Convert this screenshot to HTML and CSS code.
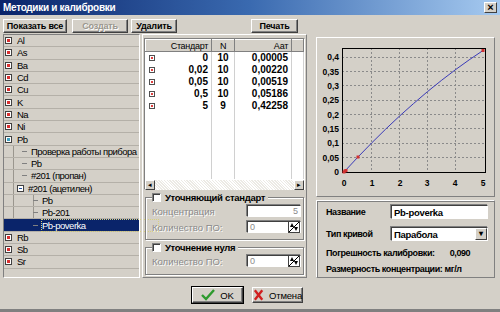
FILE: index.html
```html
<!DOCTYPE html>
<html lang="ru">
<head>
    <meta charset="UTF-8">
    <title>Методики и калибровки</title>
    <link rel="stylesheet" href="styles.css">
</head>
<body>
<div class="window">

    <div class="titlebar">
        <span class="title">Методики и калибровки</span>
        <span class="close">×</span>
    </div>

    <!-- toolbar -->
    <div class="toolbar">
        <button class="btn w-show">Показать все</button>
        <button class="btn w-create disabled">Создать</button>
        <button class="btn w-del">Удалить</button>
        <button class="btn w-print">Печать</button>
    </div>

    <div class="main">

        <!-- method tree -->
        <div class="tree">
            <div class="node"><span class="box"></span>Al</div>
            <div class="node"><span class="box"></span>As</div>
            <div class="node"><span class="box"></span>Ba</div>
            <div class="node"><span class="box"></span>Cd</div>
            <div class="node"><span class="box"></span>Cu</div>
            <div class="node"><span class="box"></span>K</div>
            <div class="node"><span class="box"></span>Na</div>
            <div class="node"><span class="box"></span>Ni</div>
            <div class="node"><span class="box open"></span>Pb</div>
            <div class="node lvl1"><span class="dash"></span>Проверка работы прибора</div>
            <div class="node lvl1"><span class="dash"></span>Pb</div>
            <div class="node lvl1"><span class="dash"></span>#201 (пропан)</div>
            <div class="node lvl1b"><span class="box minus"></span>#201 (ацетилен)</div>
            <div class="node lvl2"><span class="dash"></span>Pb</div>
            <div class="node lvl2"><span class="dash"></span>Pb-201</div>
            <div class="node lvl2 selected"><span class="dash"></span><span class="focus">Pb-poverka</span></div>
            <div class="node"><span class="box"></span>Rb</div>
            <div class="node"><span class="box"></span>Sb</div>
            <div class="node"><span class="box"></span>Sr</div>
        </div>

        <!-- standards table + options -->
        <div class="middle">
            <div class="grid">
                <table class="std">
                    <tr class="head">
                        <th class="c-std">Стандарт</th>
                        <th class="c-n">N</th>
                        <th class="c-a">Аат</th>
                        <th class="c-x"></th>
                    </tr>
                    <tr><td class="c-std"><span class="mark"></span>0</td><td class="c-n">10</td><td class="c-a">0,00005</td><td></td></tr>
                    <tr><td class="c-std"><span class="mark"></span>0,02</td><td class="c-n">10</td><td class="c-a">0,00220</td><td></td></tr>
                    <tr><td class="c-std"><span class="mark"></span>0,05</td><td class="c-n">10</td><td class="c-a">0,00519</td><td></td></tr>
                    <tr><td class="c-std"><span class="mark"></span>0,5</td><td class="c-n">10</td><td class="c-a">0,05186</td><td></td></tr>
                    <tr><td class="c-std"><span class="mark"></span>5</td><td class="c-n">9</td><td class="c-a">0,42258</td><td></td></tr>
                    <tr class="filler"><td></td><td></td><td></td><td></td></tr>
                </table>
                <div class="hscroll">
                    <span class="arrow">&#9666;</span>
                    <span class="track"></span>
                    <span class="arrow">&#9656;</span>
                </div>
            </div>

            <div class="group g1">
                <div class="group-title"><span class="check"></span>Уточняющий стандарт</div>
                <div class="field">
                    <span class="dim">Концентрация</span>
                    <span class="edit to-right">5</span>
                </div>
                <div class="field">
                    <span class="dim">Количество ПО:</span>
                    <span class="edit">0<svg class="spin" width="12" height="12" viewBox="0 0 12 12"><rect x="0.5" y="0.5" width="11" height="11" fill="#fff" stroke="#404040"/><line x1="1" y1="11" x2="11" y2="1" stroke="#000"/><path d="M2 6 L4 2 L6 6 Z" fill="#000"/><path d="M6 6 L8 10 L10 6 Z" fill="#000"/></svg></span>
                </div>
            </div>

            <div class="group g2">
                <div class="group-title"><span class="check"></span>Уточнение нуля</div>
                <div class="field">
                    <span class="dim">Количество ПО:</span>
                    <span class="edit">0<svg class="spin" width="12" height="12" viewBox="0 0 12 12"><rect x="0.5" y="0.5" width="11" height="11" fill="#fff" stroke="#404040"/><line x1="1" y1="11" x2="11" y2="1" stroke="#000"/><path d="M2 6 L4 2 L6 6 Z" fill="#000"/><path d="M6 6 L8 10 L10 6 Z" fill="#000"/></svg></span>
                </div>
            </div>
        </div>

        <!-- chart + curve info -->
        <div class="side">
            <div class="chart">
                <svg width="177" height="159" viewBox="0 0 177 159">
                    <g stroke="#8a8a8a" stroke-dasharray="2 2" fill="none">
                        <line x1="25" y1="120.5" x2="169" y2="120.5"/>
                        <line x1="25" y1="106.5" x2="169" y2="106.5"/>
                        <line x1="25" y1="91.5" x2="169" y2="91.5"/>
                        <line x1="25" y1="77.5" x2="169" y2="77.5"/>
                        <line x1="25" y1="63.5" x2="169" y2="63.5"/>
                        <line x1="25" y1="48.5" x2="169" y2="48.5"/>
                        <line x1="25" y1="34.5" x2="169" y2="34.5"/>
                        <line x1="25" y1="20.5" x2="169" y2="20.5"/>
                        <line x1="54.5" y1="11" x2="54.5" y2="136"/>
                        <line x1="82.5" y1="11" x2="82.5" y2="136"/>
                        <line x1="110.5" y1="11" x2="110.5" y2="136"/>
                        <line x1="138.5" y1="11" x2="138.5" y2="136"/>
                    </g>
                    <rect x="25.5" y="11.5" width="143" height="124" fill="none" stroke="#000"/>
                    <g class="axis-label" text-anchor="end">
                        <text x="22" y="138">0</text>
                        <text x="22" y="124">0,05</text>
                        <text x="22" y="109">0,1</text>
                        <text x="22" y="95">0,15</text>
                        <text x="22" y="81">0,2</text>
                        <text x="22" y="66">0,25</text>
                        <text x="22" y="52">0,3</text>
                        <text x="22" y="38">0,35</text>
                        <text x="22" y="23">0,4</text>
                    </g>
                    <g class="axis-label" text-anchor="middle">
                        <text x="27" y="149">0</text>
                        <text x="55" y="149">1</text>
                        <text x="83" y="149">2</text>
                        <text x="110" y="149">3</text>
                        <text x="138" y="149">4</text>
                        <text x="166" y="149">5</text>
                    </g>
                    <polyline fill="none" stroke="#3a3ab8" stroke-width="1"
                        points="27,135 40.9,120.1 54.8,105.8 68.7,92.1 82.6,79 96.5,66.6 110.4,54.7 124.3,43.5 138.2,32.9 152.1,22.9 166,13.5"/>
                    <g fill="#d03030">
                        <rect x="25.5" y="133.5" width="3" height="3"/>
                        <rect x="26.5" y="132.5" width="3" height="3"/>
                        <rect x="27.5" y="132" width="3" height="3"/>
                        <rect x="39.5" y="118.5" width="3" height="3"/>
                        <rect x="164.5" y="12" width="3" height="3"/>
                    </g>
                </svg>
            </div>

            <div class="info">
                <div class="row">
                    <span class="lbl">Название</span>
                    <span class="edit name">Pb-poverka</span>
                </div>
                <div class="row">
                    <span class="lbl">Тип кривой</span>
                    <span class="edit name combo">Парабола<span class="drop">&#9662;</span></span>
                </div>
                <div class="row text">
                    <span class="lbl">Погрешность калибровки:</span>
                    <span class="lbl val">0,090</span>
                </div>
                <div class="row text">
                    <span class="lbl">Размерность концентрации: мг/л</span>
                </div>
            </div>
        </div>
    </div>

    <div class="footer">
        <button class="btn dlg default">
            <svg width="14" height="12" viewBox="0 0 14 12"><path d="M1 6 L5 10 L13 1" fill="none" stroke="#2e9a2e" stroke-width="2.4"/></svg>
            OK
        </button>
        <button class="btn dlg">
            <svg width="12" height="12" viewBox="0 0 12 12"><path d="M2 1 L10 11 M10 1 L2 11" stroke="#d02020" stroke-width="2.6"/></svg>
            Отмена
        </button>
    </div>
</div>
</body>
</html>
```

FILE: styles.css
```css
* {
    box-sizing: border-box;
}
body {
    margin: 0;
    font-family: "Liberation Sans", Arial, sans-serif;
    font-size: 9px;
    color: #000;
    background-color: #d4d0c8;
}
.window {
    width: 500px;
    height: 312px;
    border-bottom: 3px solid #808080;
    background-color: #d4d0c8;
    overflow: hidden;
}
.titlebar {
    height: 15px;
    display: flex;
    align-items: center;
    justify-content: space-between;
    padding: 0 3px;
    background: linear-gradient(to right, #0a246a 0%, #3a6ab0 50%, #a6caf0 100%);
}
.title {
    color: #fff;
    font-weight: bold;
    font-size: 10px;
    letter-spacing: -0.3px;
}
.close {
    width: 13px;
    height: 11px;
    line-height: 9px;
    text-align: center;
    font-size: 11px;
    font-weight: bold;
    background-color: #d4d0c8;
    border: 1px solid;
    border-color: #fff #404040 #404040 #fff;
}
.btn {
    font-family: inherit;
    font-size: 9px;
    font-weight: bold;
    height: 14px;
    padding: 0;
    color: #000;
    background-color: #d4d0c8;
    border: 1px solid;
    border-color: #fff #404040 #404040 #fff;
    box-shadow: inset -1px -1px #808080;
    letter-spacing: -0.2px;
}
.btn.disabled {
    color: #9a968e;
    text-shadow: 1px 1px #fff;
}
.toolbar {
    height: 19px;
    display: flex;
    align-items: flex-start;
    padding: 4px 0 0 3px;
}
.w-show { width: 64px; }
.w-create { width: 56px; margin-left: 5px; }
.w-del { width: 46px; margin-left: 3px; }
.w-print { width: 47px; margin-left: 74px; }

.main {
    display: flex;
    height: 244px;
}

/* tree */
.tree {
    width: 137px;
    flex: none;
    margin-left: 3px;
    border: 1px solid;
    border-color: #808080 #fff #fff #808080;
}
.node {
    height: 12.3px;
    display: flex;
    align-items: center;
    border-bottom: 1px solid #b4b0a8;
    padding-left: 1px;
    white-space: nowrap;
    font-size: 9.5px;
    letter-spacing: -0.5px;
}
.box {
    width: 7px;
    height: 7px;
    flex: none;
    border: 1px solid #404040;
    background-color: #fff;
    margin-right: 5px;
    box-shadow: inset 0 0 0 1px #fff, inset 0 0 0 3px #d83030;
}
.box.open {
    box-shadow: inset 0 0 0 1px #fff, inset 0 0 0 3px #40a0c0;
}
.box.minus {
    margin-right: 4px;
    box-shadow: inset 0 2px 0 #fff, inset 0 -2px 0 #fff, inset 0 0 0 1px #fff, inset 0 0 0 3px #2050a0;
}
.lvl1, .lvl1b {
    background-image: linear-gradient(#9a968e, #9a968e);
    background-size: 1px 100%;
    background-position: 9px 0;
    background-repeat: no-repeat;
}
.lvl1 { padding-left: 18px; }
.lvl1b { padding-left: 13px; }
.lvl2 {
    padding-left: 29px;
    background-image: linear-gradient(#9a968e, #9a968e), linear-gradient(#9a968e, #9a968e);
    background-size: 1px 100%, 1px 100%;
    background-position: 9px 0, 29px 0;
    background-repeat: no-repeat;
}
.dash {
    width: 5px;
    height: 1px;
    flex: none;
    background-color: #808080;
    margin-right: 4px;
}
.node.selected {
    background: #0a246a;
    color: #fff;
}
.focus {
    outline: 1px dotted #d8d080;
    padding-right: 72px;
}

/* standards grid */
.middle {
    width: 165px;
    flex: none;
    margin-left: 2px;
    border: 1px solid;
    border-color: #fff #808080 #808080 #fff;
    padding: 3px 1px 0;
}
.grid {
    height: 152px;
    border: 1px solid;
    border-color: #808080 #fff #fff #808080;
    background-color: #fff;
}
.std {
    width: 100%;
    table-layout: fixed;
    border-collapse: collapse;
    font-size: 9px;
}
.std th {
    height: 12px;
    padding: 0 3px;
    font-weight: normal;
    background-color: #d4d0c8;
    border: 1px solid;
    border-color: #fff #808080 #808080 #fff;
    letter-spacing: -0.3px;
}
.std td {
    height: 12px;
    padding: 0 3px;
    font-weight: bold;
    font-size: 10px;
    border-right: 1px solid #d0d0d0;
}
.c-std { width: 66px; text-align: right; }
.c-n { width: 23px; text-align: center; }
.c-a { width: 57px; text-align: right; }
.std th.c-std, .std th.c-a { text-align: right; }
.std tr.filler td { height: 67px; }
.std td.c-std { position: relative; }
.mark {
    position: absolute;
    left: 3px;
    top: 3px;
    width: 6px;
    height: 6px;
    border: 1px solid #505050;
    background-color: #fff;
    box-shadow: inset 0 0 0 1px #fff, inset 0 0 0 2px #e04040;
}
.hscroll {
    display: flex;
    height: 10px;
    margin-top: 1px;
    background: repeating-linear-gradient(45deg, #eceae4 0 1px, #fff 1px 2px);
}
.arrow {
    width: 10px;
    height: 10px;
    font-size: 7px;
    line-height: 8px;
    text-align: center;
    background-color: #d4d0c8;
    border: 1px solid;
    border-color: #fff #404040 #404040 #fff;
}
.track { flex: 1; }

/* option groups */
.group {
    margin: 7px 1px 0;
    padding: 0 2px 4px 6px;
    border: 1px solid #808080;
    box-shadow: 1px 1px 0 #fff, inset 1px 1px 0 #fff;
}
.g2 { padding-bottom: 5px; }
.group-title {
    display: flex;
    align-items: center;
    width: fit-content;
    height: 11px;
    margin-top: -6px;
    padding-right: 3px;
    background-color: #d4d0c8;
    font-weight: bold;
    font-size: 9.5px;
    letter-spacing: -0.3px;
}
.check {
    width: 9px;
    height: 9px;
    margin-right: 4px;
    background-color: #fff;
    border: 1px solid;
    border-color: #808080 #fff #fff #808080;
    box-shadow: inset 1px 1px #404040;
}
.field {
    display: flex;
    align-items: center;
    justify-content: space-between;
    height: 16px;
}
.dim {
    color: #8a8a8a;
    text-shadow: 1px 1px #fff;
    font-size: 9.5px;
}
.edit {
    display: flex;
    align-items: center;
    justify-content: space-between;
    width: 54px;
    height: 12px;
    flex: none;
    padding-left: 2px;
    background-color: #fff;
    color: #8a8a8a;
    border: 1px solid;
    border-color: #404040 #fff #fff #404040;
    box-shadow: -1px -1px 0 #808080;
    font-size: 9px;
}
.edit.to-right { justify-content: flex-end; padding-right: 2px; }

/* chart and info */
.side {
    width: 179px;
    flex: none;
    margin-left: 9px;
    padding-top: 3px;
}
.chart {
    height: 160px;
    border: 1px solid;
    border-color: #fff #808080 #808080 #fff;
}
.chart svg { display: block; margin-top: -1px; }
.axis-label {
    font-family: "Liberation Sans", Arial, sans-serif;
    font-size: 8.5px;
    font-weight: bold;
    fill: #000;
}
.info {
    height: 78px;
    margin-top: 3px;
    border: 1px solid;
    border-color: #fff #808080 #808080 #fff;
    box-shadow: inset 1px 1px #808080;
    padding: 0 6px 0 9px;
}
.row {
    display: flex;
    align-items: center;
    justify-content: space-between;
    height: 22px;
}
.row.text { height: 16px; justify-content: flex-start; }
.lbl {
    font-weight: bold;
    font-size: 9px;
    letter-spacing: -0.4px;
    white-space: nowrap;
}
.val { margin-left: 15px; }
.edit.name {
    width: 97px;
    height: 14px;
    color: #000;
    font-weight: bold;
    font-size: 9.5px;
    letter-spacing: -0.3px;
}
.combo { padding-right: 0; }
.drop {
    width: 12px;
    height: 12px;
    font-size: 8px;
    line-height: 10px;
    text-align: center;
    background-color: #d4d0c8;
    border: 1px solid;
    border-color: #fff #404040 #404040 #fff;
}

/* dialog buttons */
.footer {
    display: flex;
    justify-content: center;
    gap: 9px;
    padding: 9px 5px 0 0;
}
.btn.dlg {
    width: 51px;
    height: 16px;
    display: flex;
    align-items: center;
    justify-content: center;
    gap: 5px;
    font-weight: normal;
    font-size: 9.5px;
}
.btn.default {
    outline: 1px solid #000;
}
```
